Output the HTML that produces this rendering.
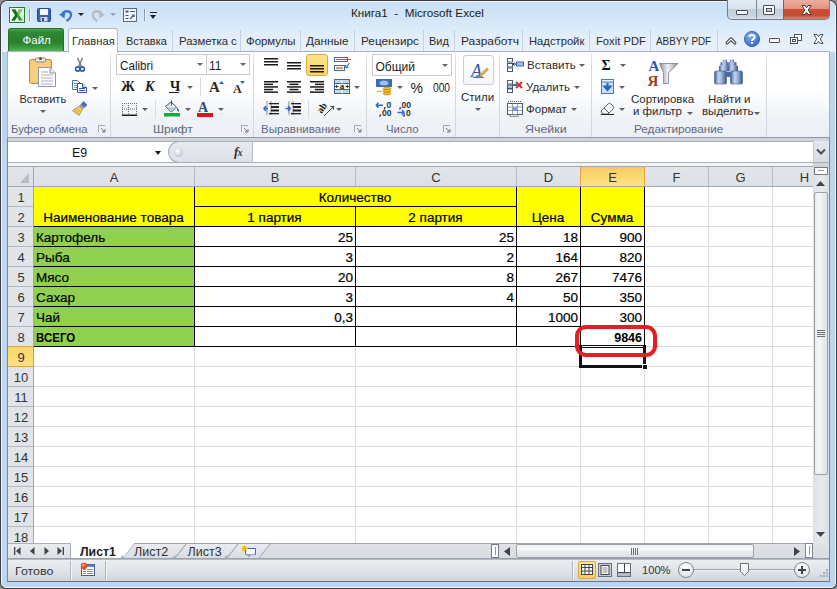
<!DOCTYPE html><html><head><meta charset="utf-8"><style>
*{box-sizing:border-box;margin:0;padding:0}
html,body{width:837px;height:589px;overflow:hidden;background:#8f8f8f}
body{position:relative;font-family:"Liberation Sans",sans-serif;font-size:11px;color:#1e1e1e}
.a{position:absolute}
.t{position:absolute;white-space:nowrap;line-height:1}
svg{position:absolute;overflow:visible}
.tab{position:absolute;top:35.5px;font-size:11px;color:#2b2b2b;white-space:nowrap;line-height:1}
.tsep{position:absolute;top:30px;width:1px;height:21px;background:#c8d1dc}
.gsep{position:absolute;top:53px;width:1px;height:84px;background:linear-gradient(180deg,#e6e9ee,#d5dae0 15%,#d2d7de 100%)}
.glabel{position:absolute;top:124px;font-size:11px;color:#5f6880;white-space:nowrap;line-height:1}
.rt{position:absolute;font-size:11px;color:#2b2b2b;white-space:nowrap;line-height:1}
.hl{position:absolute;background:#9ea6b0}
.hi{position:absolute;background:#b3b9c1}
.gl{position:absolute;background:#dadcdd}
.bl{position:absolute;background:#000}
.ht{position:absolute;font-size:13px;color:#333;white-space:nowrap;line-height:1}
.c{position:absolute;font-size:13.5px;white-space:nowrap;color:#000;line-height:1;-webkit-text-stroke:0.2px #000}
.dd{position:absolute;width:0;height:0;border-left:3px solid transparent;border-right:3px solid transparent;border-top:3.5px solid #606060;margin-left:-0.5px}
</style></head><body>
<div class="a" style="left:0;top:0;width:837px;height:589px;background:#3c3c3c;border-radius:7px 7px 6px 6px"></div>
<div class="a" style="left:1px;top:1px;width:835px;height:587px;background:#bcd5f1;border:1px solid #eef5fd;border-radius:6px 6px 5px 5px"></div>
<div class="a" style="left:2px;top:2px;width:833px;height:50px;border-radius:5px 5px 0 0;background:linear-gradient(180deg,#c8dff8 0%,#d2e6f9 30%,#dbebfa 52%,#e3eefa 70%,#e9f2fb 100%)"></div>
<div class="t" style="left:351px;top:7px;font-size:11.7px;color:#1a1a1a">Книга1&nbsp; -&nbsp; Microsoft Excel</div>
<svg style="left:9px;top:7px" width="16" height="16" viewBox="0 0 16 16">
<defs><linearGradient id="xg" x1="0" y1="0" x2="1" y2="1"><stop offset="0" stop-color="#ffffff"/><stop offset="1" stop-color="#d6ecd0"/></linearGradient></defs>
<rect x="0.5" y="0.5" width="15" height="15" fill="url(#xg)" stroke="#2a7a30"/>
<path d="M2.5 2.5 L6.3 2.5 L8.2 6 L10 2.5 L13.5 2.5 L10 8 L13.8 13.5 L10 13.5 L8 9.8 L5.9 13.5 L2.3 13.5 L6.2 8 Z" fill="#2f9a3a"/>
<path d="M2.5 2.5 L6.3 2.5 L8.2 6 L8 9.8 L5.9 13.5 L2.3 13.5 L6.2 8 Z" fill="#1f6e26"/>
<path d="M10 2.5 L13.5 2.5 L10 8 L8.2 6 Z" fill="#7ccf6a"/>
</svg>
<div class="a" style="left:29px;top:9px;width:1px;height:12px;background:#8897aa"></div>
<div class="a" style="left:30px;top:9px;width:1px;height:12px;background:#f4f8fc"></div>
<svg style="left:37px;top:8px" width="14" height="14" viewBox="0 0 14 14">
<rect x="0.5" y="0.5" width="13" height="13" rx="1" fill="#3a64b4" stroke="#284a8a"/>
<rect x="3" y="1" width="8" height="6" fill="#f4f6fa"/>
<rect x="3.5" y="9" width="7" height="4.5" fill="#cfd8e6"/>
<rect x="5" y="10" width="2" height="3" fill="#284a8a"/>
</svg>
<svg style="left:59px;top:8px" width="14" height="14" viewBox="0 0 14 14">
<path d="M3.5 6.5 C4.5 2.5 11.5 2 12 6.5 C12.3 9 10 11.5 7.5 13" fill="none" stroke="#3a78d0" stroke-width="2.4"/>
<path d="M0 6.5 L6.5 3.5 L5.5 10.5 Z" fill="#3a78d0"/>
</svg>
<div class="dd" style="left:78px;top:13px;border-top-color:#222;border-left-width:3px;border-right-width:3px;border-top-width:3px"></div>
<svg style="left:91px;top:8px" width="14" height="14" viewBox="0 0 14 14">
<path d="M10.5 6.5 C9.5 2.5 2.5 2 2 6.5 C1.7 9 4 11.5 6.5 13" fill="none" stroke="#b4bdc8" stroke-width="2.4"/>
<path d="M14 6.5 L7.5 3.5 L8.5 10.5 Z" fill="#b4bdc8"/>
</svg>
<div class="dd" style="left:110px;top:13px;border-top-color:#9aa4b0;border-left-width:3px;border-right-width:3px;border-top-width:3px"></div>
<svg style="left:123px;top:8px" width="14" height="14" viewBox="0 0 14 14">
<rect x="0.5" y="0.5" width="13" height="13" fill="#f3f6fa" stroke="#5a6a80"/>
<rect x="2.5" y="2.5" width="3" height="2" fill="#3d5a8c"/>
<rect x="7" y="3" width="5" height="1" fill="#3d5a8c"/>
<rect x="2.5" y="7" width="3" height="1" fill="#3d5a8c"/>
<rect x="2.5" y="10" width="3" height="1" fill="#3d5a8c"/>
<path d="M7 11 L11 7 M9 7 L11 7 L11 9" stroke="#3d5a8c" fill="none" stroke-width="1.2"/>
</svg>
<div class="a" style="left:144px;top:9px;width:1px;height:12px;background:#8897aa"></div>
<div class="a" style="left:145px;top:9px;width:1px;height:12px;background:#f4f8fc"></div>
<div class="a" style="left:150px;top:12px;width:7px;height:1px;background:#222"></div>
<div class="dd" style="left:150px;top:15px;border-top-color:#222;border-left-width:3.5px;border-right-width:3.5px;border-top-width:4px"></div>
<div class="a" style="left:727px;top:0px;width:103px;height:20px;border:1px solid #6f7d8f;border-top:none;border-radius:0 0 5px 5px;overflow:hidden;background:linear-gradient(180deg,#e4ecf5 0%,#d9e3ee 45%,#c2ced9 50%,#c9d4df 85%,#dce4ec 100%)"><div class="a" style="left:55px;top:0;width:47px;height:19px;background:linear-gradient(180deg,#eab0a0 0%,#e29480 45%,#cd5034 50%,#c24a30 80%,#e0856d 100%);border-left:1px solid #8a5a50"></div><div class="a" style="left:28px;top:0;width:1px;height:19px;background:#7f8b99"></div></div>
<div class="a" style="left:736px;top:10px;width:12px;height:5px;background:#fff;border:1px solid #4a4f57;border-radius:1px"></div>
<div class="a" style="left:763px;top:5px;width:12px;height:10px;background:#fff;border:1px solid #4a4f57;border-radius:1px"><div class="a" style="left:2px;top:2px;width:6px;height:4px;border:1px solid #4a4f57;background:#c9d3de"></div></div>
<svg style="left:801px;top:5px" width="11" height="10" viewBox="0 0 11 10">
<path d="M1 0.5 L4 0.5 L5.5 2.8 L7 0.5 L10 0.5 L7.3 5 L10 9.5 L7 9.5 L5.5 7.2 L4 9.5 L1 9.5 L3.7 5 Z" fill="#fff" stroke="#4a3a36" stroke-width="1"/>
</svg>
<div class="a" style="left:8px;top:28px;width:56px;height:24px;border:1px solid #2a6e2d;border-bottom:none;border-radius:3px 3px 0 0;background:linear-gradient(180deg,#52a855 0%,#2f8a34 12%,#2a7e2f 55%,#3a9a3e 80%,#5cc05e 100%)"></div>
<div class="t" style="left:22.5px;top:34.5px;color:#fff;font-size:11.5px">Файл</div>
<div class="a" style="left:68px;top:28px;width:50px;height:25px;border:1px solid #b6bcc6;border-bottom:none;border-radius:3px 3px 0 0;background:#fff;z-index:2"></div>
<div class="tab" style="left:72px;z-index:3;transform:scaleX(1.02);transform-origin:0 0">Главная</div>
<div class="tab" style="left:126px;transform:scaleX(1);transform-origin:0 0">Вставка</div>
<div class="tsep" style="left:172px"></div>
<div class="tab" style="left:179px;transform:scaleX(1.03);transform-origin:0 0">Разметка с</div>
<div class="tsep" style="left:240px"></div>
<div class="tab" style="left:246px;transform:scaleX(1.035);transform-origin:0 0">Формулы</div>
<div class="tsep" style="left:300px"></div>
<div class="tab" style="left:306px;transform:scaleX(1.07);transform-origin:0 0">Данные</div>
<div class="tsep" style="left:354px"></div>
<div class="tab" style="left:361px;transform:scaleX(1.07);transform-origin:0 0">Рецензирс</div>
<div class="tsep" style="left:423px"></div>
<div class="tab" style="left:429px;transform:scaleX(1);transform-origin:0 0">Вид</div>
<div class="tsep" style="left:454px"></div>
<div class="tab" style="left:461px;transform:scaleX(1.09);transform-origin:0 0">Разработч</div>
<div class="tsep" style="left:522px"></div>
<div class="tab" style="left:529px;transform:scaleX(1.02);transform-origin:0 0">Надстройк</div>
<div class="tsep" style="left:589px"></div>
<div class="tab" style="left:596px;transform:scaleX(1.02);transform-origin:0 0">Foxit PDF</div>
<div class="tsep" style="left:650px"></div>
<div class="tab" style="left:656px;transform:scaleX(0.895);transform-origin:0 0">ABBYY PDF</div>
<div class="tsep" style="left:717px"></div>
<svg style="left:726px;top:37px" width="10" height="7" viewBox="0 0 10 7">
<path d="M1.2 5.8 L5 2 L8.8 5.8" fill="none" stroke="#3c3f44" stroke-width="3.2" stroke-linejoin="round" stroke-linecap="round"/><path d="M1.2 5.8 L5 2 L8.8 5.8" fill="none" stroke="#fff" stroke-width="1.1" stroke-linejoin="round" stroke-linecap="round"/>
</svg>
<svg style="left:744px;top:31px" width="16" height="16" viewBox="0 0 16 16">
<defs><radialGradient id="hg" cx="0.4" cy="0.3" r="0.8"><stop offset="0" stop-color="#7fb0f0"/><stop offset="1" stop-color="#2d63c0"/></radialGradient></defs>
<circle cx="8" cy="8" r="7.6" fill="url(#hg)" stroke="#2a56a8" stroke-width="0.8"/>
<path d="M5.3 6 C5.3 3.2 10.7 3.2 10.7 6 C10.7 8 8 8 8 10" fill="none" stroke="#fff" stroke-width="2"/>
<rect x="7" y="11" width="2" height="2" fill="#fff"/>
</svg>
<div class="a" style="left:769px;top:38px;width:11px;height:5px;border:1px solid #4a4f57;background:#fff;border-radius:1px"></div>
<div class="a" style="left:794px;top:34px;width:8px;height:7px;border:1px solid #4a4f57;background:#fff"></div>
<div class="a" style="left:790px;top:37px;width:8px;height:7px;border:1px solid #4a4f57;background:#fff"><div class="a" style="left:1px;top:1px;width:4px;height:3px;border:1px solid #4a4f57"></div></div>
<svg style="left:813px;top:34px" width="11" height="10" viewBox="0 0 11 10">
<path d="M1 0.5 L4 0.5 L5.5 2.8 L7 0.5 L10 0.5 L7.3 5 L10 9.5 L7 9.5 L5.5 7.2 L4 9.5 L1 9.5 L3.7 5 Z" fill="#fff" stroke="#4a4f57" stroke-width="1"/>
</svg>
<div class="a" style="left:7px;top:51px;width:823px;height:87px;border:1px solid #a9b1bc;border-bottom-color:#8f98a3;background:linear-gradient(180deg,#ffffff 0%,#ffffff 45%,#f7f9fb 60%,#eff2f6 80%,#eceff3 100%)"></div>
<div class="gsep" style="left:110px"></div>
<div class="gsep" style="left:253px"></div>
<div class="gsep" style="left:366px"></div>
<div class="gsep" style="left:455px"></div>
<div class="gsep" style="left:499px"></div>
<div class="gsep" style="left:591px"></div>
<div class="gsep" style="left:766px"></div>
<div class="glabel" style="left:10.5px;transform:scaleX(1.024);transform-origin:0 0">Буфер обмена</div>
<div class="glabel" style="left:152.5px;transform:scaleX(1.1);transform-origin:0 0">Шрифт</div>
<div class="glabel" style="left:260.5px;transform:scaleX(1.049);transform-origin:0 0">Выравнивание</div>
<div class="glabel" style="left:385.5px;transform:scaleX(1.03);transform-origin:0 0">Число</div>
<div class="glabel" style="left:525px;transform:scaleX(1.13);transform-origin:0 0">Ячейки</div>
<div class="glabel" style="left:634px;transform:scaleX(1.065);transform-origin:0 0">Редактирование</div>
<svg style="left:98px;top:125px" width="8" height="8" viewBox="0 0 8 8">
<path d="M0.5 7 L0.5 0.5 L7 0.5" fill="none" stroke="#a0a8b4"/><path d="M3 3 L7 7 M7 4 L7 7 L4 7" fill="none" stroke="#6b778a"/></svg>
<svg style="left:241px;top:125px" width="8" height="8" viewBox="0 0 8 8">
<path d="M0.5 7 L0.5 0.5 L7 0.5" fill="none" stroke="#a0a8b4"/><path d="M3 3 L7 7 M7 4 L7 7 L4 7" fill="none" stroke="#6b778a"/></svg>
<svg style="left:354px;top:125px" width="8" height="8" viewBox="0 0 8 8">
<path d="M0.5 7 L0.5 0.5 L7 0.5" fill="none" stroke="#a0a8b4"/><path d="M3 3 L7 7 M7 4 L7 7 L4 7" fill="none" stroke="#6b778a"/></svg>
<svg style="left:443px;top:125px" width="8" height="8" viewBox="0 0 8 8">
<path d="M0.5 7 L0.5 0.5 L7 0.5" fill="none" stroke="#a0a8b4"/><path d="M3 3 L7 7 M7 4 L7 7 L4 7" fill="none" stroke="#6b778a"/></svg>
<svg style="left:29px;top:57px" width="28" height="30" viewBox="0 0 28 30">
<rect x="0.5" y="2.5" width="22" height="24" rx="2" fill="#f4c470" stroke="#b88a3a"/>
<rect x="2" y="4" width="19" height="21" rx="1" fill="#f8cf80"/>
<rect x="6.5" y="1" width="10" height="4" rx="1" fill="#e8e8e8" stroke="#8a8a8a"/>
<circle cx="11.5" cy="1.5" r="1.5" fill="#8a4030"/>
<path d="M9.5 10.5 L21 10.5 L26.5 16 L26.5 29.5 L9.5 29.5 Z" fill="#fff" stroke="#8e98a6"/>
<path d="M21 10.5 L21 16 L26.5 16" fill="#e4e8ee" stroke="#8e98a6"/>
<path d="M12 15h7M12 18h12M12 21h12M12 24h12M12 27h12" stroke="#a8b0bc" stroke-width="1"/>
</svg>
<div class="rt" style="left:19.5px;top:94px">Вставить</div>
<div class="dd" style="left:40px;top:110px"></div>
<svg style="left:75px;top:58px" width="10" height="14" viewBox="0 0 10 14">
<path d="M2.5 0 L6.5 9 M7.5 0 L3.5 9" stroke="#707070" stroke-width="1.3"/>
<circle cx="2.7" cy="11" r="2.1" fill="none" stroke="#2a5ab8" stroke-width="1.6"/>
<circle cx="7.3" cy="11" r="2.1" fill="none" stroke="#2a5ab8" stroke-width="1.6"/>
</svg>
<svg style="left:72px;top:80px" width="15" height="13" viewBox="0 0 15 13">
<path d="M0.5 0.5 L5.5 0.5 L8.5 3.5 L8.5 9.5 L0.5 9.5 Z" fill="#fff" stroke="#4a70b0"/>
<rect x="2" y="3" width="4" height="1" fill="#6a90d0"/><rect x="2" y="5" width="5" height="1" fill="#6a90d0"/><rect x="2" y="7" width="5" height="1" fill="#6a90d0"/>
<path d="M5.5 3.5 L10.5 3.5 L14.5 7.5 L14.5 12.5 L5.5 12.5 Z" fill="#fff" stroke="#2a58a8"/>
<path d="M10.5 3.5 L10.5 7.5 L14.5 7.5" fill="#dbe6f6" stroke="#2a58a8"/>
<rect x="7" y="8" width="6" height="1" fill="#2a58a8"/><rect x="7" y="10" width="6" height="1" fill="#2a58a8"/>
</svg>
<div class="dd" style="left:92px;top:87px"></div>
<svg style="left:72px;top:101px" width="16" height="15" viewBox="0 0 16 15">
<path d="M11.5 0.5 L15 4 L12 6.5 L9 3.5 Z" fill="#4a70b8" stroke="#2a4a88" stroke-width="0.6"/>
<path d="M9 3.5 L12 6.5 L10.5 8 L7.5 5 Z" fill="#a8b4c4" stroke="#6a7686" stroke-width="0.6"/>
<path d="M7.5 5 L10.5 8 L7 14.5 L0.5 9.5 Z" fill="#f2cc6a" stroke="#a88232" stroke-width="0.8"/>
<path d="M2.5 10.5 L6 7.5 M4.5 12 L8 9" stroke="#c89a40" stroke-width="0.8"/>
</svg>
<div class="a" style="left:116px;top:54px;width:91px;height:21px;border:1px solid #c6cbd2;background:#fff"></div>
<div class="a" style="left:206px;top:54px;width:44px;height:21px;border:1px solid #c6cbd2;background:#fff"></div>
<div class="t" style="left:119.5px;top:60px;font-size:12px;color:#1a1a1a;transform:scaleX(0.97);transform-origin:0 0">Calibri</div>
<div class="t" style="left:209px;top:60px;font-size:12px;color:#1a1a1a">11</div>
<div class="dd" style="left:197px;top:63px;border-top-color:#666"></div>
<div class="dd" style="left:240px;top:63px;border-top-color:#666"></div>
<div class="t" style="left:121px;top:80px;font-family:'Liberation Serif';font-weight:bold;font-size:14px;color:#1a1a1a">Ж</div>
<div class="t" style="left:145px;top:80px;font-family:'Liberation Serif';font-weight:bold;font-style:italic;font-size:14px;color:#1a1a1a">К</div>
<div class="t" style="left:170px;top:80px;font-family:'Liberation Serif';font-weight:bold;font-size:14px;color:#1a1a1a">Ч</div>
<div class="a" style="left:169px;top:92px;width:10px;height:1px;background:#1a1a1a"></div>
<div class="dd" style="left:187px;top:86px"></div>
<div class="a" style="left:200px;top:78px;width:1px;height:18px;background:#d6dbe1"></div>
<div class="t" style="left:209px;top:80px;font-family:'Liberation Serif';font-weight:bold;font-size:15px;color:#2a2a2a">A</div>
<svg style="left:219px;top:80.5px" width="5" height="3"><path d="M0 3 L2.5 0 L5 3Z" fill="#2e63c0"/></svg>
<div class="t" style="left:233px;top:83px;font-family:'Liberation Serif';font-weight:bold;font-size:12px;color:#2a2a2a">A</div>
<svg style="left:240px;top:80.5px" width="5" height="3"><path d="M0 0 L2.5 3 L5 0Z" fill="#2e63c0"/></svg>
<svg style="left:122px;top:103px" width="15" height="13" viewBox="0 0 15 13"><rect x="0" y="0" width="1" height="1" fill="#6a7380"/><rect x="2" y="0" width="1" height="1" fill="#6a7380"/><rect x="4" y="0" width="1" height="1" fill="#6a7380"/><rect x="6" y="0" width="1" height="1" fill="#6a7380"/><rect x="8" y="0" width="1" height="1" fill="#6a7380"/><rect x="10" y="0" width="1" height="1" fill="#6a7380"/><rect x="12" y="0" width="1" height="1" fill="#6a7380"/><rect x="14" y="0" width="1" height="1" fill="#6a7380"/><rect x="0" y="5.5" width="1" height="1" fill="#6a7380"/><rect x="2" y="5.5" width="1" height="1" fill="#6a7380"/><rect x="4" y="5.5" width="1" height="1" fill="#6a7380"/><rect x="6" y="5.5" width="1" height="1" fill="#6a7380"/><rect x="8" y="5.5" width="1" height="1" fill="#6a7380"/><rect x="10" y="5.5" width="1" height="1" fill="#6a7380"/><rect x="12" y="5.5" width="1" height="1" fill="#6a7380"/><rect x="14" y="5.5" width="1" height="1" fill="#6a7380"/><rect x="0" y="2" width="1" height="1" fill="#6a7380"/><rect x="0" y="4" width="1" height="1" fill="#6a7380"/><rect x="0" y="6" width="1" height="1" fill="#6a7380"/><rect x="0" y="8" width="1" height="1" fill="#6a7380"/><rect x="0" y="10" width="1" height="1" fill="#6a7380"/><rect x="6" y="2" width="1" height="1" fill="#6a7380"/><rect x="6" y="4" width="1" height="1" fill="#6a7380"/><rect x="6" y="6" width="1" height="1" fill="#6a7380"/><rect x="6" y="8" width="1" height="1" fill="#6a7380"/><rect x="6" y="10" width="1" height="1" fill="#6a7380"/><rect x="14" y="2" width="1" height="1" fill="#6a7380"/><rect x="14" y="4" width="1" height="1" fill="#6a7380"/><rect x="14" y="6" width="1" height="1" fill="#6a7380"/><rect x="14" y="8" width="1" height="1" fill="#6a7380"/><rect x="14" y="10" width="1" height="1" fill="#6a7380"/><rect x="0" y="11.5" width="15" height="1.5" fill="#1a1a1a"/></svg>
<div class="dd" style="left:142px;top:108px"></div>
<div class="a" style="left:155px;top:100px;width:1px;height:18px;background:#d6dbe1"></div>
<svg style="left:164px;top:100px" width="16" height="17" viewBox="0 0 16 17">
<path d="M1.5 6.5 L7 2 L12.5 7 L7.5 12 Z" fill="#f4f8fc" stroke="#3a4a5e" stroke-width="1"/>
<path d="M2 6.8 L12 7.2 L7.5 11.5 Z" fill="#b8cce8"/>
<path d="M12.5 7 C14.5 8.5 15.5 10 15 11.5 C14.3 12.5 13 11 12.5 7Z" fill="#3a6ac0"/>
<path d="M7.5 0.5 L7.5 5.5" stroke="#3a4a5e" stroke-width="1"/>
<rect x="0" y="13" width="16" height="3.5" fill="#1aa83c"/>
</svg>
<div class="dd" style="left:185px;top:108px"></div>
<div class="t" style="left:198px;top:101px;font-family:'Liberation Serif';font-weight:bold;font-size:14px;color:#2a4a90">A</div>
<div class="a" style="left:197px;top:113px;width:16px;height:3.5px;background:#e8101c"></div>
<div class="dd" style="left:218px;top:108px"></div>
<svg style="left:264px;top:57.5px" width="15" height="14" viewBox="0 0 15 14"><rect x="0" y="0" width="14" height="1.5" fill="#1a1a1a"/><rect x="0" y="3" width="14" height="1.5" fill="#1a1a1a"/><rect x="0" y="6" width="14" height="1.5" fill="#1a1a1a"/></svg>
<svg style="left:287px;top:61.5px" width="15" height="14" viewBox="0 0 15 14"><rect x="0" y="0" width="14" height="1.5" fill="#1a1a1a"/><rect x="0" y="3" width="14" height="1.5" fill="#1a1a1a"/><rect x="0" y="6" width="14" height="1.5" fill="#1a1a1a"/></svg>
<div class="a" style="left:306px;top:54px;width:22px;height:22px;border:1px solid #d8a640;border-radius:3px;background:linear-gradient(180deg,#ffe48c,#fbd46a)"></div>
<svg style="left:310px;top:64.5px" width="15" height="14" viewBox="0 0 15 14"><rect x="0" y="0" width="14" height="1.5" fill="#1a1a1a"/><rect x="0" y="3" width="14" height="1.5" fill="#1a1a1a"/><rect x="0" y="6" width="14" height="1.5" fill="#1a1a1a"/></svg>
<svg style="left:334px;top:57px" width="17" height="15" viewBox="0 0 17 15">
<rect x="0.5" y="0.5" width="13" height="4" fill="#f4f7fb" stroke="#4a6a98"/>
<rect x="2" y="2" width="15" height="1" fill="#b05a38"/>
<rect x="0.5" y="8.5" width="10" height="5" fill="#f4f7fb" stroke="#4a6a98"/>
<rect x="2" y="10.5" width="7" height="1.2" fill="#b05a38"/>
<path d="M15.5 6 L12.5 10" stroke="#2e6ad0" stroke-width="1.2"/><path d="M11.5 8 L12 10.8 L14.5 10.3" stroke="#2e6ad0" fill="none" stroke-width="1.1"/>
</svg>
<svg style="left:264px;top:80.5px" width="15" height="14" viewBox="0 0 15 14"><rect x="0" y="0.0" width="14" height="1.5" fill="#1a1a1a"/><rect x="0" y="2.6" width="9" height="1.5" fill="#1a1a1a"/><rect x="0" y="5.2" width="14" height="1.5" fill="#1a1a1a"/><rect x="0" y="7.800000000000001" width="9" height="1.5" fill="#1a1a1a"/><rect x="0" y="10.4" width="14" height="1.5" fill="#1a1a1a"/></svg>
<svg style="left:287px;top:80.5px" width="15" height="14" viewBox="0 0 15 14"><rect x="0" y="0.0" width="14" height="1.5" fill="#1a1a1a"/><rect x="2.5" y="2.6" width="9" height="1.5" fill="#1a1a1a"/><rect x="0" y="5.2" width="14" height="1.5" fill="#1a1a1a"/><rect x="2.5" y="7.800000000000001" width="9" height="1.5" fill="#1a1a1a"/><rect x="0" y="10.4" width="14" height="1.5" fill="#1a1a1a"/></svg>
<svg style="left:310px;top:80.5px" width="15" height="14" viewBox="0 0 15 14"><rect x="0" y="0.0" width="14" height="1.5" fill="#1a1a1a"/><rect x="5" y="2.6" width="9" height="1.5" fill="#1a1a1a"/><rect x="0" y="5.2" width="14" height="1.5" fill="#1a1a1a"/><rect x="5" y="7.800000000000001" width="9" height="1.5" fill="#1a1a1a"/><rect x="0" y="10.4" width="14" height="1.5" fill="#1a1a1a"/></svg>
<svg style="left:334px;top:79px" width="16" height="15" viewBox="0 0 16 15">
<rect x="0.5" y="0.5" width="15" height="14" fill="#c4d6ee" stroke="#3f63a0"/>
<rect x="1" y="4.5" width="14" height="6" fill="#f8fafc"/>
<path d="M1 4.5h14M1 10.5h14" stroke="#3f63a0" stroke-width="1"/>
<path d="M8 1v3.5M8 11v3.5" stroke="#f8fafc" stroke-width="1"/>
<text x="8" y="10" font-size="9" font-family="Liberation Serif" font-weight="bold" text-anchor="middle" fill="#1a1a1a">a</text>
<path d="M1.5 7.5h3M1.5 7.5 L3 6.3M1.5 7.5 L3 8.7 M14.5 7.5h-3M14.5 7.5 L13 6.3M14.5 7.5 L13 8.7" stroke="#1a1a1a" stroke-width="0.9" fill="none"/>
</svg>
<div class="dd" style="left:354.5px;top:86px"></div>
<svg style="left:263px;top:101px" width="16" height="15" viewBox="0 0 16 15">
<path d="M4 0.5v14M8 0.5v14" stroke="#222" stroke-dasharray="1 1"/>
<rect x="6" y="2" width="10" height="1.3" fill="#222"/><rect x="8" y="5" width="8" height="2" fill="#222"/><rect x="8" y="8.5" width="8" height="2" fill="#222"/><rect x="6" y="12" width="10" height="1.3" fill="#222"/>
<path d="M0.5 7.5 L5 7.5 M0.5 7.5 L3 5 M0.5 7.5 L3 10" stroke="#2e6ad0" stroke-width="1.3" fill="none"/>
</svg>
<svg style="left:285px;top:101px" width="16" height="15" viewBox="0 0 16 15">
<path d="M4 0.5v14M8 0.5v14" stroke="#222" stroke-dasharray="1 1"/>
<rect x="6" y="2" width="10" height="1.3" fill="#222"/><rect x="8" y="5" width="8" height="2" fill="#222"/><rect x="8" y="8.5" width="8" height="2" fill="#222"/><rect x="6" y="12" width="10" height="1.3" fill="#222"/>
<path d="M0.5 7.5 L5.5 7.5 M5.5 7.5 L3 5 M5.5 7.5 L3 10" stroke="#2e6ad0" stroke-width="1.3" fill="none"/>
</svg>
<div class="a" style="left:308px;top:100px;width:1px;height:18px;background:#d6dbe1"></div>
<svg style="left:318px;top:100px" width="17" height="17" viewBox="0 0 17 17">
<text x="0" y="0" font-size="10" font-family="Liberation Serif" font-weight="bold" fill="#1a1a1a" transform="translate(3.5,14) rotate(-55)">ab</text>
<path d="M6 16 L15.5 6.5" stroke="#3a3f46" stroke-width="1"/><path d="M12.3 6.5 L15.5 6.5 L15.5 9.7" stroke="#3a3f46" fill="none" stroke-width="1"/>
</svg>
<div class="dd" style="left:336px;top:108px"></div>
<div class="a" style="left:372px;top:54px;width:80px;height:22px;border:1px solid #c6cbd2;background:#fff"></div>
<div class="t" style="left:375.5px;top:61px;font-size:12px;color:#1a1a1a">Общий</div>
<div class="dd" style="left:442px;top:64px;border-top-color:#666"></div>
<svg style="left:376px;top:79px" width="16" height="16" viewBox="0 0 16 16">
<rect x="0" y="0" width="16" height="8" fill="#3a6ab8"/><ellipse cx="8" cy="4" rx="4.5" ry="2.5" fill="#9cc0ea"/>
<ellipse cx="11" cy="9.5" rx="4" ry="1.5" fill="#f2b830" stroke="#b07a10" stroke-width="0.6"/>
<ellipse cx="11" cy="12" rx="4" ry="1.5" fill="#f2b830" stroke="#b07a10" stroke-width="0.6"/>
<ellipse cx="11" cy="14.5" rx="4" ry="1.5" fill="#f2b830" stroke="#b07a10" stroke-width="0.6"/>
<rect x="1" y="11.5" width="5" height="1.5" fill="#f2b830"/>
</svg>
<div class="dd" style="left:397.5px;top:86px"></div>
<div class="t" style="left:410.5px;top:81px;font-size:14px;color:#1a1a1a">%</div>
<div class="t" style="left:433px;top:82px;font-size:12px;color:#1a1a1a;transform:scaleX(0.85);transform-origin:0 0">000</div>
<svg style="left:375px;top:101px" width="40" height="16" viewBox="0 0 40 16">
<g font-family="Liberation Sans" font-weight="bold" font-size="8.5" fill="#2a3340">
<text x="11.5" y="7.2">0</text><text x="7" y="14.6">00</text>
<text x="26.5" y="7.2">00</text><text x="31" y="14.6">0</text>
</g>
<g fill="#2a3340"><path d="M9.2 6.2 h1.8 l-1.2 2.2 h-1.2z"/><path d="M4.7 13.6 h1.8 l-1.2 2.2 h-1.2z"/><path d="M24.7 6.2 h1.8 l-1.2 2.2 h-1.2z"/><path d="M28.7 13.6 h1.8 l-1.2 2.2 h-1.2z"/></g>
<path d="M1 4.2 L8 4.2 M1 4.2 L3.6 1.8 M1 4.2 L3.6 6.6" stroke="#2f6ad8" stroke-width="1.5" fill="none"/>
<path d="M22.5 11.6 L29.5 11.6 M29.5 11.6 L26.9 9.2 M29.5 11.6 L26.9 14" stroke="#2f6ad8" stroke-width="1.5" fill="none"/>
</svg>
<div class="a" style="left:463px;top:55px;width:31px;height:30px;border:1px solid #c8cdd4;border-radius:3px;background:linear-gradient(180deg,#ffffff,#f4f6f9)"></div>
<svg style="left:470px;top:61px" width="20" height="18" viewBox="0 0 20 18">
<text x="1" y="15.5" font-family="Liberation Serif" font-style="italic" font-size="18" fill="#3458a8">A</text>
<path d="M9 14.5 L17 7 L18.5 8.5 L11 16 Z" fill="#e8b040" stroke="#a07020" stroke-width="0.5"/>
<path d="M5 16.5 C6 13.5 9 13 10.5 15 C9 16.5 7 17 5 16.5 Z" fill="#5a8ad8"/>
<path d="M3 16.5 L14 16.5" stroke="#3458a8" stroke-width="0.8"/>
</svg>
<div class="rt" style="left:461px;top:92px;font-size:11.5px">Стили</div>
<div class="dd" style="left:475.5px;top:108px"></div>
<svg style="left:507px;top:58px" width="17" height="14" viewBox="0 0 17 14">
<rect x="0.5" y="0.5" width="5" height="3.5" fill="#fff" stroke="#4a5a70"/><rect x="0.5" y="5.5" width="5" height="3.5" fill="#fff" stroke="#4a5a70"/><rect x="0.5" y="10" width="5" height="3.5" fill="#fff" stroke="#4a5a70"/>
<rect x="9.5" y="4" width="7" height="4" fill="#9cc0ea" stroke="#3a6ab8"/><path d="M6 6h3.5M7.5 4.5 L6 6 L7.5 7.5" stroke="#222" fill="none"/>
</svg>
<div class="rt" style="left:527px;top:60px;font-size:11.5px">Вставить</div>
<div class="dd" style="left:579.5px;top:64px"></div>
<svg style="left:507px;top:80px" width="17" height="13" viewBox="0 0 17 13">
<rect x="0.5" y="0.5" width="5" height="3.5" fill="#fff" stroke="#4a5a70"/><rect x="0.5" y="5" width="5" height="3.5" fill="#9cc0ea" stroke="#4a5a70"/><rect x="0.5" y="9" width="5" height="3.5" fill="#fff" stroke="#4a5a70"/>
<path d="M9 2 L15 8 M15 2 L9 8" stroke="#e02a20" stroke-width="2"/><path d="M6 5h4" stroke="#3a6ab8" stroke-width="2"/>
</svg>
<div class="rt" style="left:526px;top:82px;font-size:11.5px">Удалить</div>
<div class="dd" style="left:574.5px;top:86px"></div>
<svg style="left:507px;top:101px" width="17" height="16" viewBox="0 0 17 16">
<rect x="0.5" y="2.5" width="15" height="11" fill="#fff" stroke="#4a5a70"/>
<path d="M0.5 6h15M0.5 9.5h15M5.5 2.5v11M10.5 2.5v11" stroke="#7a8aa0" stroke-width="0.8"/>
<rect x="6" y="6.5" width="4" height="3" fill="#6a9ae0"/>
<path d="M1 0.5h14" stroke="#4a5a70" stroke-dasharray="1 1"/>
<rect x="3" y="13.5" width="8" height="2" fill="#dfe6f0" stroke="#4a5a70" stroke-width="0.6"/>
</svg>
<div class="rt" style="left:526px;top:103.5px;font-size:11.5px">Формат</div>
<div class="dd" style="left:571.5px;top:108px"></div>
<div class="t" style="left:601.5px;top:58.5px;font-family:'Liberation Serif';font-weight:bold;font-size:14px;color:#111">&Sigma;</div>
<div class="dd" style="left:620px;top:64px"></div>
<svg style="left:601px;top:79px" width="13" height="15" viewBox="0 0 13 15">
<rect x="0.5" y="0.5" width="12" height="14" fill="#cfe0f6" stroke="#4a78c0"/>
<rect x="0.5" y="0.5" width="12" height="2.5" fill="#eef4fc" stroke="#4a78c0"/>
<path d="M6.5 4 L6.5 9 M3.5 7.5 L6.5 11 L9.5 7.5 Z" stroke="#2a64c8" fill="#2a64c8" stroke-width="2"/>
</svg>
<div class="dd" style="left:619px;top:86px"></div>
<svg style="left:600px;top:102px" width="15" height="13" viewBox="0 0 15 13">
<path d="M1 9 L8 2 C9 1 10 1 11 2 L13 4 C14 5 14 6 13 7 L8 12 L3 12 Z" fill="#f4f6f8" stroke="#5a6470"/>
<path d="M4 6 L9 11" stroke="#5a6470"/>
<path d="M1 12.5h13" stroke="#222"/>
</svg>
<div class="dd" style="left:619px;top:108px"></div>
<svg style="left:646px;top:56px" width="34" height="31" viewBox="0 0 34 31">
<defs><linearGradient id="fn" x1="0" x2="1"><stop offset="0" stop-color="#8a9098"/><stop offset="0.45" stop-color="#f0f2f4"/><stop offset="1" stop-color="#8a9098"/></linearGradient></defs>
<path d="M13.5 7.5 L32 7.5 L22.5 17 L22.5 27.5 L17.5 27.5 L17.5 17 Z" fill="url(#fn)" stroke="#7a8088" stroke-width="0.8"/>
<text x="2.5" y="14.5" font-family="Liberation Serif" font-weight="bold" font-size="15" fill="#2f55b0">A</text>
<text x="1.5" y="29.5" font-family="Liberation Serif" font-weight="bold" font-size="15" fill="#9a3a22">Я</text>
</svg>
<div class="rt" style="left:631px;top:94px;font-size:11.5px">Сортировка</div>
<div class="rt" style="left:633px;top:106px;font-size:11.5px">и фильтр</div>
<div class="dd" style="left:687.5px;top:112px"></div>
<svg style="left:714px;top:59px" width="29" height="26" viewBox="0 0 29 26">
<defs><linearGradient id="bn" x1="0" x2="1"><stop offset="0" stop-color="#3d5e98"/><stop offset="0.35" stop-color="#c4d4ee"/><stop offset="0.6" stop-color="#9ab2da"/><stop offset="1" stop-color="#34528a"/></linearGradient></defs>
<rect x="9" y="0.5" width="4" height="3" rx="1" fill="url(#bn)"/><rect x="16" y="0.5" width="4" height="3" rx="1" fill="url(#bn)"/>
<rect x="6.5" y="3" width="8" height="4" rx="1" fill="url(#bn)"/><rect x="14.5" y="3" width="8" height="4" rx="1" fill="url(#bn)"/>
<rect x="5" y="6.5" width="10" height="6" rx="1" fill="url(#bn)"/><rect x="14" y="6.5" width="10" height="6" rx="1" fill="url(#bn)"/>
<rect x="0.5" y="12" width="12" height="13" rx="1.5" fill="url(#bn)" stroke="#3a5890" stroke-width="0.6"/><rect x="16.5" y="12" width="12" height="13" rx="1.5" fill="url(#bn)" stroke="#3a5890" stroke-width="0.6"/>
<rect x="12" y="13" width="5" height="5" fill="#4a6aa0"/>
</svg>
<div class="rt" style="left:708px;top:94px;font-size:11.5px">Найти и</div>
<div class="rt" style="left:702px;top:106px;font-size:11.5px">выделить</div>
<div class="dd" style="left:754.5px;top:112px"></div>
<div class="a" style="left:7px;top:138px;width:823px;height:29px;background:#cfd4db"></div>
<div class="a" style="left:7px;top:141px;width:822px;height:22px;background:#fff;border-top:1px solid #a9b0b9;border-bottom:1px solid #a9b0b9;border-left:1px solid #a9b0b9"></div>
<div class="a" style="left:8px;top:163px;width:805px;height:4px;background:#f1f3f6;border-bottom:1px solid #a3aab4"></div>
<div class="t" style="left:72px;top:145.5px;font-size:13px;color:#111;transform:scaleX(0.95);transform-origin:0 0">E9</div>
<div class="dd" style="left:155px;top:150.5px;border-top-color:#1a1a1a;border-left-width:3.5px;border-right-width:3.5px;border-top-width:4.5px"></div>
<div class="a" style="left:168px;top:141px;width:85px;height:22px;border:1px solid #a9b0b9;border-right:1px solid #b8bec6;border-radius:11px 0 0 11px;background:linear-gradient(180deg,#e6e9ed,#dde1e6)"></div>
<div class="a" style="left:173.5px;top:147.5px;width:9px;height:9px;border-radius:50%;background:radial-gradient(circle at 40% 35%,#ffffff,#c4c9d0 70%,#aab0b8)"></div>
<div class="t" style="left:234px;top:145px;font-family:'Liberation Serif';font-style:italic;font-weight:bold;font-size:13px;color:#2e2e2e">f<span style="font-size:9.5px;margin-left:-0.5px">x</span></div>
<div class="a" style="left:813px;top:141px;width:16px;height:21px;background:linear-gradient(180deg,#e4e7eb,#d8dce2);border-left:1px solid #c3c8cf"></div>
<svg style="left:816px;top:148px" width="10" height="7" viewBox="0 0 10 7"><path d="M1 1.5 L5 5.5 L9 1.5" fill="none" stroke="#4a4f57" stroke-width="2"/></svg>
<div class="a" style="left:8px;top:167px;width:805px;height:376px;background:#fff;overflow:hidden" id="g">
<div class="a " style="left:0px;top:0px;width:805px;height:19px;background:linear-gradient(180deg,#e2e5e9,#dde1e6)"></div>
<div class="a " style="left:0px;top:20px;width:25px;height:356px;background:#e1e4e8"></div>
<svg style="left:12px;top:6px" width="9" height="10" viewBox="0 0 9 10"><path d="M9 0 L9 10 L0 10 Z" fill="#b9bec5"/></svg>
<div class="a " style="left:573px;top:0px;width:63px;height:19px;background:linear-gradient(180deg,#f6c65e 0%,#fad36c 25%,#fcd970 55%,#fde488 100%)"></div>
<div class="a " style="left:572px;top:0px;width:1px;height:20px;background:#dfa145"></div>
<div class="a " style="left:636px;top:0px;width:1px;height:20px;background:#dfa145"></div>
<div class="a " style="left:572px;top:19px;width:65px;height:1px;background:#dfa145"></div>
<div class="a " style="left:0px;top:180px;width:25px;height:19px;background:linear-gradient(180deg,#fbd56a,#fcdc74 50%,#fde182)"></div>
<div class="a " style="left:0px;top:179px;width:26px;height:1px;background:#dfa145"></div>
<div class="a " style="left:0px;top:199px;width:26px;height:1px;background:#dfa145"></div>
<div class="a " style="left:25px;top:179px;width:1px;height:21px;background:#dfa145"></div>
<div class="a gl" style="left:186px;top:20px;width:1px;height:356px;"></div>
<div class="a gl" style="left:347px;top:20px;width:1px;height:356px;"></div>
<div class="a gl" style="left:508px;top:20px;width:1px;height:356px;"></div>
<div class="a gl" style="left:572px;top:20px;width:1px;height:356px;"></div>
<div class="a gl" style="left:636px;top:20px;width:1px;height:356px;"></div>
<div class="a gl" style="left:700px;top:20px;width:1px;height:356px;"></div>
<div class="a gl" style="left:764px;top:20px;width:1px;height:356px;"></div>
<div class="a gl" style="left:26px;top:39px;width:779px;height:1px;"></div>
<div class="a gl" style="left:26px;top:59px;width:779px;height:1px;"></div>
<div class="a gl" style="left:26px;top:79px;width:779px;height:1px;"></div>
<div class="a gl" style="left:26px;top:99px;width:779px;height:1px;"></div>
<div class="a gl" style="left:26px;top:119px;width:779px;height:1px;"></div>
<div class="a gl" style="left:26px;top:139px;width:779px;height:1px;"></div>
<div class="a gl" style="left:26px;top:159px;width:779px;height:1px;"></div>
<div class="a gl" style="left:26px;top:179px;width:779px;height:1px;"></div>
<div class="a gl" style="left:26px;top:199px;width:779px;height:1px;"></div>
<div class="a gl" style="left:26px;top:219px;width:779px;height:1px;"></div>
<div class="a gl" style="left:26px;top:239px;width:779px;height:1px;"></div>
<div class="a gl" style="left:26px;top:259px;width:779px;height:1px;"></div>
<div class="a gl" style="left:26px;top:279px;width:779px;height:1px;"></div>
<div class="a gl" style="left:26px;top:299px;width:779px;height:1px;"></div>
<div class="a gl" style="left:26px;top:319px;width:779px;height:1px;"></div>
<div class="a gl" style="left:26px;top:339px;width:779px;height:1px;"></div>
<div class="a gl" style="left:26px;top:359px;width:779px;height:1px;"></div>
<div class="a gl" style="left:26px;top:379px;width:779px;height:1px;"></div>
<div class="a hl" style="left:0px;top:19px;width:805px;height:1px;"></div>
<div class="a hl" style="left:25px;top:0px;width:1px;height:376px;"></div>
<div class="a hi" style="left:186px;top:0px;width:1px;height:19px;"></div>
<div class="a hi" style="left:347px;top:0px;width:1px;height:19px;"></div>
<div class="a hi" style="left:508px;top:0px;width:1px;height:19px;"></div>
<div class="a hi" style="left:700px;top:0px;width:1px;height:19px;"></div>
<div class="a hi" style="left:764px;top:0px;width:1px;height:19px;"></div>
<div class="a hi" style="left:0px;top:39px;width:25px;height:1px;"></div>
<div class="a hi" style="left:0px;top:59px;width:25px;height:1px;"></div>
<div class="a hi" style="left:0px;top:79px;width:25px;height:1px;"></div>
<div class="a hi" style="left:0px;top:99px;width:25px;height:1px;"></div>
<div class="a hi" style="left:0px;top:119px;width:25px;height:1px;"></div>
<div class="a hi" style="left:0px;top:139px;width:25px;height:1px;"></div>
<div class="a hi" style="left:0px;top:159px;width:25px;height:1px;"></div>
<div class="a hi" style="left:0px;top:219px;width:25px;height:1px;"></div>
<div class="a hi" style="left:0px;top:239px;width:25px;height:1px;"></div>
<div class="a hi" style="left:0px;top:259px;width:25px;height:1px;"></div>
<div class="a hi" style="left:0px;top:279px;width:25px;height:1px;"></div>
<div class="a hi" style="left:0px;top:299px;width:25px;height:1px;"></div>
<div class="a hi" style="left:0px;top:319px;width:25px;height:1px;"></div>
<div class="a hi" style="left:0px;top:339px;width:25px;height:1px;"></div>
<div class="a hi" style="left:0px;top:359px;width:25px;height:1px;"></div>
<div class="a hi" style="left:0px;top:379px;width:25px;height:1px;"></div>
<div class="a " style="left:26px;top:20px;width:160px;height:39px;background:#ffff00"></div>
<div class="a " style="left:187px;top:20px;width:321px;height:19px;background:#ffff00"></div>
<div class="a " style="left:187px;top:40px;width:160px;height:19px;background:#ffff00"></div>
<div class="a " style="left:348px;top:40px;width:160px;height:19px;background:#ffff00"></div>
<div class="a " style="left:509px;top:20px;width:63px;height:39px;background:#ffff00"></div>
<div class="a " style="left:573px;top:20px;width:63px;height:39px;background:#ffff00"></div>
<div class="a " style="left:26px;top:60px;width:160px;height:119px;background:#92d050"></div>
<div class="a bl" style="left:186px;top:20px;width:1px;height:160px;"></div>
<div class="a bl" style="left:347px;top:39px;width:1px;height:141px;"></div>
<div class="a bl" style="left:508px;top:20px;width:1px;height:160px;"></div>
<div class="a bl" style="left:572px;top:20px;width:1px;height:160px;"></div>
<div class="a bl" style="left:636px;top:20px;width:1px;height:160px;"></div>
<div class="a bl" style="left:187px;top:39px;width:321px;height:1px;"></div>
<div class="a bl" style="left:26px;top:59px;width:611px;height:1px;"></div>
<div class="a bl" style="left:26px;top:79px;width:611px;height:1px;"></div>
<div class="a bl" style="left:26px;top:99px;width:611px;height:1px;"></div>
<div class="a bl" style="left:26px;top:119px;width:611px;height:1px;"></div>
<div class="a bl" style="left:26px;top:139px;width:611px;height:1px;"></div>
<div class="a bl" style="left:26px;top:159px;width:611px;height:1px;"></div>
<div class="a bl" style="left:26px;top:179px;width:611px;height:1px;"></div>
<div class="ht" style="left:66.0px;top:4px;width:80px;text-align:center;font-size:13px;color:#333">A</div>
<div class="ht" style="left:227.0px;top:4px;width:80px;text-align:center;font-size:13px;color:#333">B</div>
<div class="ht" style="left:388.0px;top:4px;width:80px;text-align:center;font-size:13px;color:#333">C</div>
<div class="ht" style="left:500.5px;top:4px;width:80px;text-align:center;font-size:13px;color:#333">D</div>
<div class="ht" style="left:564.5px;top:4px;width:80px;text-align:center;font-size:13px;color:#333">E</div>
<div class="ht" style="left:628.5px;top:4px;width:80px;text-align:center;font-size:13px;color:#333">F</div>
<div class="ht" style="left:692.5px;top:4px;width:80px;text-align:center;font-size:13px;color:#333">G</div>
<div class="ht" style="left:756.5px;top:4px;width:80px;text-align:center;font-size:13px;color:#333">H</div>
<div class="ht" style="left:-27px;top:24px;width:80px;text-align:center;font-size:13px;color:#333">1</div>
<div class="ht" style="left:-27px;top:44px;width:80px;text-align:center;font-size:13px;color:#333">2</div>
<div class="ht" style="left:-27px;top:64px;width:80px;text-align:center;font-size:13px;color:#333">3</div>
<div class="ht" style="left:-27px;top:84px;width:80px;text-align:center;font-size:13px;color:#333">4</div>
<div class="ht" style="left:-27px;top:104px;width:80px;text-align:center;font-size:13px;color:#333">5</div>
<div class="ht" style="left:-27px;top:124px;width:80px;text-align:center;font-size:13px;color:#333">6</div>
<div class="ht" style="left:-27px;top:144px;width:80px;text-align:center;font-size:13px;color:#333">7</div>
<div class="ht" style="left:-27px;top:164px;width:80px;text-align:center;font-size:13px;color:#333">8</div>
<div class="ht" style="left:-27px;top:184px;width:80px;text-align:center;font-size:13px;color:#333">9</div>
<div class="ht" style="left:-27px;top:204px;width:80px;text-align:center;font-size:13px;color:#333">10</div>
<div class="ht" style="left:-27px;top:224px;width:80px;text-align:center;font-size:13px;color:#333">11</div>
<div class="ht" style="left:-27px;top:244px;width:80px;text-align:center;font-size:13px;color:#333">12</div>
<div class="ht" style="left:-27px;top:264px;width:80px;text-align:center;font-size:13px;color:#333">13</div>
<div class="ht" style="left:-27px;top:284px;width:80px;text-align:center;font-size:13px;color:#333">14</div>
<div class="ht" style="left:-27px;top:304px;width:80px;text-align:center;font-size:13px;color:#333">15</div>
<div class="ht" style="left:-27px;top:324px;width:80px;text-align:center;font-size:13px;color:#333">16</div>
<div class="ht" style="left:-27px;top:344px;width:80px;text-align:center;font-size:13px;color:#333">17</div>
<div class="ht" style="left:-27px;top:364px;width:80px;text-align:center;font-size:13px;color:#333">18</div>
<div class="c" style="left:186px;top:23.5px;width:322px;text-align:center;">Количество</div>
<div class="c" style="left:25px;top:43.5px;width:161px;text-align:center;">Наименование товара</div>
<div class="c" style="left:186px;top:43.5px;width:161px;text-align:center;">1 партия</div>
<div class="c" style="left:347px;top:43.5px;width:161px;text-align:center;">2 партия</div>
<div class="c" style="left:508px;top:43.5px;width:64px;text-align:center;">Цена</div>
<div class="c" style="left:572px;top:43.5px;width:64px;text-align:center;">Сумма</div>
<div class="c" style="left:28px;top:63.599999999999994px;">Картофель</div>
<div class="c" style="left:245px;top:63.599999999999994px;width:100px;text-align:right;">25</div>
<div class="c" style="left:406px;top:63.599999999999994px;width:100px;text-align:right;">25</div>
<div class="c" style="left:470px;top:63.599999999999994px;width:100px;text-align:right;">18</div>
<div class="c" style="left:534px;top:63.599999999999994px;width:100px;text-align:right;">900</div>
<div class="c" style="left:28px;top:83.6px;">Рыба</div>
<div class="c" style="left:245px;top:83.6px;width:100px;text-align:right;">3</div>
<div class="c" style="left:406px;top:83.6px;width:100px;text-align:right;">2</div>
<div class="c" style="left:470px;top:83.6px;width:100px;text-align:right;">164</div>
<div class="c" style="left:534px;top:83.6px;width:100px;text-align:right;">820</div>
<div class="c" style="left:28px;top:103.60000000000002px;">Мясо</div>
<div class="c" style="left:245px;top:103.60000000000002px;width:100px;text-align:right;">20</div>
<div class="c" style="left:406px;top:103.60000000000002px;width:100px;text-align:right;">8</div>
<div class="c" style="left:470px;top:103.60000000000002px;width:100px;text-align:right;">267</div>
<div class="c" style="left:534px;top:103.60000000000002px;width:100px;text-align:right;">7476</div>
<div class="c" style="left:28px;top:123.60000000000002px;">Сахар</div>
<div class="c" style="left:245px;top:123.60000000000002px;width:100px;text-align:right;">3</div>
<div class="c" style="left:406px;top:123.60000000000002px;width:100px;text-align:right;">4</div>
<div class="c" style="left:470px;top:123.60000000000002px;width:100px;text-align:right;">50</div>
<div class="c" style="left:534px;top:123.60000000000002px;width:100px;text-align:right;">350</div>
<div class="c" style="left:28px;top:143.60000000000002px;">Чай</div>
<div class="c" style="left:245px;top:143.60000000000002px;width:100px;text-align:right;">0,3</div>
<div class="c" style="left:470px;top:143.60000000000002px;width:100px;text-align:right;">1000</div>
<div class="c" style="left:534px;top:143.60000000000002px;width:100px;text-align:right;">300</div>
<div class="c" style="left:28px;top:164.60000000000002px;font-weight:bold;font-size:12px;-webkit-text-stroke:0;transform:scaleX(0.96);transform-origin:0 0">ВСЕГО</div>
<div class="c" style="left:534px;top:164.60000000000002px;width:100px;text-align:right;font-weight:bold;font-size:12.5px;-webkit-text-stroke:0">9846</div>
<div class="a " style="left:571px;top:178px;width:3px;height:23px;background:#111"></div>
<div class="a " style="left:635px;top:178px;width:3px;height:23px;background:#111"></div>
<div class="a " style="left:571px;top:198px;width:67px;height:3px;background:#111"></div>
<div class="a " style="left:571px;top:178px;width:67px;height:1px;background:#111"></div>
<div class="a " style="left:574px;top:179px;width:61px;height:1px;background:#fff"></div>
<div class="a " style="left:574px;top:180px;width:61px;height:1px;background:#111"></div>
<div class="a " style="left:634px;top:197px;width:6px;height:6px;background:#111;border:1px solid #fff"></div>
</div>
<div class="a" style="left:575px;top:325px;width:82px;height:32px;border:4.5px solid #e81c24;border-radius:11px"></div>
<div class="a" style="left:813px;top:167px;width:16px;height:376px;background:linear-gradient(90deg,#dde1e6,#e6e9ed 50%,#dde1e6)"></div>
<div class="a" style="left:814px;top:167px;width:14px;height:8px;border:1px solid #737a83;border-top-width:1.5px;background:#fff"><div class="a" style="left:3px;top:2px;width:6px;height:1px;background:#8e959e"></div></div>
<svg style="left:816px;top:181px" width="9" height="5" viewBox="0 0 9 5"><path d="M0 5 L4.5 0 L9 5Z" fill="#3f444b"/></svg>
<div class="a" style="left:813.5px;top:192px;width:14.5px;height:283px;border:1px solid #9aa1aa;border-radius:2px;background:linear-gradient(90deg,#e8ebee,#f7f8fa 35%,#eceef1 60%,#dfe3e7)"></div>
<div class="a" style="left:817px;top:330px;width:8px;height:7px;background:repeating-linear-gradient(180deg,#6a717a 0 1px,transparent 1px 2px)"></div>
<svg style="left:816px;top:532px" width="9" height="5" viewBox="0 0 9 5"><path d="M0 0 L4.5 5 L9 0Z" fill="#3f444b"/></svg>
<div class="a" style="left:8px;top:543px;width:821px;height:16px;background:linear-gradient(180deg,#dfe3e8,#d6dbe1)"></div>
<div class="a" style="left:8px;top:543px;width:805px;height:1px;background:#9ea6b0"></div>
<div class="a" style="left:8px;top:558px;width:821px;height:1px;background:#98a0aa"></div>
<div class="a" style="left:8px;top:543px;width:63px;height:15px;background:linear-gradient(180deg,#e9ecef,#dde1e6);border-right:1px solid #a9b0b9;border-top:1px solid #a9b0b9"></div>
<svg style="left:14px;top:547px" width="52" height="8" viewBox="0 0 52 8">
<rect x="0" y="0" width="1.3" height="8" fill="#3f444b"/><path d="M6.5 0 L2 4 L6.5 8Z" fill="#3f444b"/>
<path d="M20.5 0 L16 4 L20.5 8Z" fill="#3f444b"/>
<path d="M30.5 0 L35 4 L30.5 8Z" fill="#3f444b"/>
<path d="M43.5 0 L48 4 L43.5 8Z" fill="#3f444b"/><rect x="48.7" y="0" width="1.3" height="8" fill="#3f444b"/>
</svg>
<svg style="left:0px;top:543px" width="300" height="16" viewBox="0 0 300 16">
<defs><linearGradient id="tg" x1="0" y1="0" x2="0" y2="1"><stop offset="0" stop-color="#e9ecf0"/><stop offset="1" stop-color="#d9dde3"/></linearGradient></defs>
<path d="M226.5 15.5 L238.5 0.5 L270.5 0.5 L258.5 15.5 Z" fill="url(#tg)" stroke="#9aa2ac"/>
<path d="M174.5 15.5 L186.5 0.5 L238.5 0.5 L226.5 15.5 Z" fill="url(#tg)" stroke="#9aa2ac"/>
<path d="M122.5 15.5 L134.5 0.5 L186.5 0.5 L174.5 15.5 Z" fill="url(#tg)" stroke="#9aa2ac"/>
<path d="M71 -1 L71 15.5 L122.5 15.5 L135 -1 Z" fill="#ffffff"/>
<path d="M71 15.5 L122.5 15.5" stroke="#9aa2ac"/>
<path d="M120 15 L123 12 L124 15 Z" fill="#a9b0b9"/>
<path d="M172 15 L175 12 L176 15 Z" fill="#a9b0b9"/>
<path d="M224 15 L227 12 L228 15 Z" fill="#a9b0b9"/>
</svg>
<div class="t" style="left:80px;top:546px;font-size:12.5px;font-weight:bold;color:#222;transform:scaleX(0.98);transform-origin:0 0">Лист1</div>
<div class="t" style="left:134px;top:546px;font-size:12.5px;color:#333;transform:scaleX(1.0);transform-origin:0 0">Лист2</div>
<div class="t" style="left:187.5px;top:546px;font-size:12.5px;color:#333;transform:scaleX(1.0);transform-origin:0 0">Лист3</div>
<svg style="left:241px;top:545px" width="16" height="12" viewBox="0 0 16 12">
<path d="M4.5 3.5 L14.5 3.5 L14.5 9.5 L10 9.5 L8 11.5 L6 9.5 L4.5 9.5 Z" fill="#fff" stroke="#3d68b0"/>
<path d="M5 9.5 L13.5 9.5" stroke="#8aa8d8"/>
<path d="M3.5 0.5 L3.5 6.5 M0.5 3.5 L6.5 3.5 M1.3 1.3 L5.7 5.7 M5.7 1.3 L1.3 5.7" stroke="#f2b21c" stroke-width="1.1"/>
</svg>
<div class="a" style="left:491px;top:544px;width:8px;height:14px;background:#fff;border:1px solid #737a83"><div class="a" style="left:2.5px;top:2px;width:1px;height:8px;background:#8e959e"></div></div>
<svg style="left:504px;top:547px" width="6" height="9" viewBox="0 0 6 9"><path d="M6 0 L0 4.5 L6 9Z" fill="#3f444b"/></svg>
<div class="a" style="left:516px;top:543.5px;width:238px;height:14.5px;border:1px solid #9aa1aa;border-radius:2px;background:linear-gradient(180deg,#eef0f3,#f7f8fa 35%,#e6e9ed 60%,#dde1e6)"></div>
<div class="a" style="left:631px;top:548px;width:8px;height:7px;background:repeating-linear-gradient(90deg,#6a717a 0 1px,transparent 1px 2px)"></div>
<svg style="left:794px;top:547px" width="6" height="9" viewBox="0 0 6 9"><path d="M0 0 L6 4.5 L0 9Z" fill="#3f444b"/></svg>
<div class="a" style="left:805px;top:543px;width:8px;height:15px;background:#fff;border:1px solid #7d848d"><div class="a" style="left:2.5px;top:2px;width:1px;height:9px;background:#8e959e"></div></div>
<div class="a" style="left:7px;top:559px;width:823px;height:23px;background:linear-gradient(180deg,#eceef2 0%,#e1e4e9 45%,#d2d6dc 100%);border:1px solid #66778b;border-top:1px solid #b3bac3"></div>
<div class="rt" style="left:15px;top:565.5px;font-size:11.5px;color:#333;transform:scaleX(1.08);transform-origin:0 0">Готово</div>
<div class="a" style="left:70px;top:561px;width:1px;height:19px;background:#aeb5be"></div>
<div class="a" style="left:71px;top:561px;width:1px;height:19px;background:#f4f6f8"></div>
<div class="a" style="left:105px;top:561px;width:1px;height:19px;background:#aeb5be"></div>
<div class="a" style="left:106px;top:561px;width:1px;height:19px;background:#f4f6f8"></div>
<div class="a" style="left:572px;top:561px;width:1px;height:19px;background:#aeb5be"></div>
<div class="a" style="left:573px;top:561px;width:1px;height:19px;background:#f4f6f8"></div>
<svg style="left:80px;top:562px" width="15" height="14" viewBox="0 0 15 14">
<rect x="1.5" y="2.5" width="13" height="11" fill="#fff" stroke="#3d64a8"/>
<rect x="2" y="3" width="12" height="2" fill="#5a88d0"/>
<path d="M3 7.5h3M7 7.5h6M3 9.5h3M7 9.5h6M3 11.5h3M7 11.5h6" stroke="#6a90d0" stroke-width="1"/>
<circle cx="4" cy="4" r="3.2" fill="#e0502a"/><circle cx="3.3" cy="3.2" r="1.2" fill="#f8a080"/>
</svg>
<div class="a" style="left:578px;top:561px;width:18px;height:18px;border:1px solid #d9a640;border-radius:2px;background:linear-gradient(180deg,#ffe596,#f9cf63)"></div>
<svg style="left:581px;top:564px" width="12" height="11" viewBox="0 0 12 11">
<rect x="0.5" y="0.5" width="11" height="10" fill="#fff" stroke="#3f444b"/>
<path d="M0.5 3.5h11M0.5 7h11M4 0.5v10M8 0.5v10" stroke="#3f444b"/>
</svg>
<svg style="left:598px;top:563px" width="14" height="14" viewBox="0 0 14 14">
<rect x="0.5" y="0.5" width="13" height="13" fill="#c9cfd7" stroke="#6a717a"/>
<rect x="3" y="2.5" width="8" height="9" fill="#fff" stroke="#3f444b"/>
<path d="M4.5 5h5M4.5 7h5M4.5 9h5" stroke="#888"/>
</svg>
<svg style="left:617px;top:563px" width="14" height="14" viewBox="0 0 14 14">
<rect x="0.5" y="0.5" width="13" height="13" fill="#b4bcc6" stroke="#6a717a"/>
<rect x="1" y="1" width="6" height="8" fill="#fff"/><rect x="8" y="1" width="5" height="8" fill="#fff"/>
<path d="M7.5 0.5v9M0.5 9.5h13" stroke="#3f444b"/>
</svg>
<div class="rt" style="left:642px;top:564.5px;font-size:11.5px;color:#333;transform:scaleX(0.97);transform-origin:0 0">100%</div>
<div class="a" style="left:694px;top:569px;width:100px;height:1px;background:#9aa1aa"></div>
<div class="a" style="left:694px;top:570px;width:100px;height:1px;background:#f4f6f8"></div>
<div class="a" style="left:678px;top:562px;width:16px;height:16px;border-radius:50%;border:1px solid #7d858f;background:radial-gradient(circle at 50% 30%,#ffffff,#e4e7eb 70%,#d2d7dd)"></div>
<div class="a" style="left:794px;top:562px;width:16px;height:16px;border-radius:50%;border:1px solid #7d858f;background:radial-gradient(circle at 50% 30%,#ffffff,#e4e7eb 70%,#d2d7dd)"></div>
<div class="a" style="left:682px;top:569px;width:8px;height:2px;background:#3f444b"></div>
<div class="a" style="left:798px;top:569px;width:8px;height:2px;background:#3f444b"></div>
<div class="a" style="left:801px;top:566px;width:2px;height:8px;background:#3f444b"></div>
<svg style="left:740px;top:563px" width="9" height="13" viewBox="0 0 9 13"><path d="M0.5 0.5 L8.5 0.5 L8.5 8.5 L4.5 12.5 L0.5 8.5 Z" fill="#f4f6f8" stroke="#6a717a"/></svg>
<svg style="left:818px;top:569px" width="10" height="10" viewBox="0 0 10 10">
<rect x="8" y="0" width="2" height="2" fill="#a9b0b9"/><rect x="5" y="3" width="2" height="2" fill="#a9b0b9"/><rect x="8" y="3" width="2" height="2" fill="#a9b0b9"/>
<rect x="2" y="6" width="2" height="2" fill="#a9b0b9"/><rect x="5" y="6" width="2" height="2" fill="#a9b0b9"/><rect x="8" y="6" width="2" height="2" fill="#a9b0b9"/>
</svg>
<div class="a" style="left:7px;top:138px;width:1px;height:443px;background:#7a8794"></div>
<div class="a" style="left:829px;top:138px;width:1px;height:443px;background:#7a8794"></div>
</body></html>
